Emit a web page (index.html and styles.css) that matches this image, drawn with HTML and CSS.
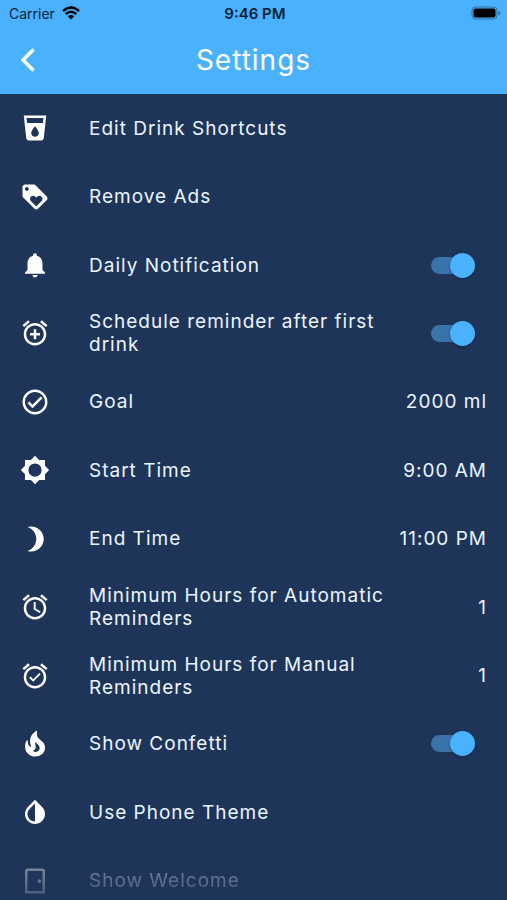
FILE: index.html
```html
<!DOCTYPE html>
<html lang="en">
<head>
<meta charset="utf-8">
<meta name="viewport" content="width=device-width, initial-scale=1">
<title>Settings</title>
<link rel="stylesheet" href="styles.css">
</head>
<body>
<div class="screen">
  <header class="top">
    <div class="status">
      <div class="carrier">
        <span>Carrier</span>
        <svg class="wifi" viewBox="0 0 18 14" aria-hidden="true">
          <path d="M1 5Q9 -2 17 5" />
          <path d="M3.800 8Q9 3.400 14.200 8" />
          <path class="dot" d="M9 13.500 5.900 10.300Q9 7.900 12.100 10.300Z" />
        </svg>
      </div>
      <time class="clock">9:46 PM</time>
      <svg class="battery" viewBox="0 0 30 14" aria-hidden="true">
        <rect class="shell" x="1" y="1" width="25" height="12" rx="3.500" />
        <rect x="2.500" y="2.500" width="22" height="9" rx="2" />
        <path class="tip" d="M27.500 4.800Q29.500 5.500 29.500 7T27.500 9.200Z" />
      </svg>
    </div>
    <div class="bar">
      <button class="back" type="button" aria-label="Back">
        <svg viewBox="0 0 16 26" aria-hidden="true"><path d="M13.500 2.500 3 13 13.500 23.500" /></svg>
      </button>
      <h1 class="title">Settings</h1>
    </div>
  </header>
  <main class="list">
    <div class="row">
      <svg class="icon" viewBox="0 0 24 24" aria-hidden="true"><path d="M3 2l2.010 18.230C5.130 21.230 5.970 22 7 22h10c1.030 0 1.870-.77 1.990-1.770L21 2H3zm9 17c-1.660 0-3-1.340-3-3 0-2 3-5.400 3-5.400s3 3.400 3 5.400c0 1.660-1.340 3-3 3zm6.330-11H5.670l-.44-4h13.550l-.45 4z" /></svg>
      <span class="label">Edit Drink Shortcuts</span>
    </div>
    <div class="row">
      <svg class="icon" viewBox="0 0 24 24" aria-hidden="true"><path d="M21.410 11.580l-9-9C12.050 2.220 11.550 2 11 2H4c-1.100 0-2 .9-2 2v7c0 .55.22 1.050.59 1.420l9 9c.36.36.86.58 1.410.58.55 0 1.050-.22 1.410-.59l7-7c.37-.36.59-.86.59-1.410 0-.55-.23-1.060-.59-1.420zM5.500 7C4.670 7 4 6.330 4 5.500S4.670 4 5.500 4 7 4.670 7 5.500 6.330 7 5.500 7zm11.770 8.270L13 19.540l-4.270-4.270C8.280 14.810 8 14.190 8 13.500c0-1.380 1.120-2.500 2.500-2.500.69 0 1.320.28 1.770.74l.73.72.73-.73c.45-.45 1.080-.73 1.770-.73 1.380 0 2.500 1.120 2.500 2.500 0 .69-.28 1.320-.73 1.770z" /></svg>
      <span class="label">Remove Ads</span>
    </div>
    <div class="row">
      <svg class="icon" viewBox="0 0 24 24" aria-hidden="true"><path d="M12 22c1.100 0 2-.9 2-2h-4c0 1.100.89 2 2 2zm6-6v-5c0-3.070-1.640-5.640-4.500-6.320V4c0-.83-.67-1.500-1.500-1.500s-1.500.67-1.500 1.500v.68C7.630 5.360 6 7.920 6 11v5l-2 2v1h16v-1l-2-2z" /></svg>
      <label class="label" for="daily">Daily Notification</label>
      <input class="switch" id="daily" type="checkbox" role="switch" checked>
    </div>
    <div class="row">
      <svg class="icon" viewBox="0 0 24 24" aria-hidden="true"><path d="M7.880 3.390L6.600 1.860 2 5.710l1.290 1.530 4.590-3.850zM22 5.720l-4.600-3.860-1.290 1.530 4.600 3.860L22 5.720zM12 4c-4.970 0-9 4.030-9 9s4.020 9 9 9c4.970 0 9-4.030 9-9s-4.030-9-9-9zm0 16c-3.870 0-7-3.130-7-7s3.130-7 7-7 7 3.130 7 7-3.130 7-7 7zm1-11h-2v3H8v2h3v3h2v-3h3v-2h-3V9z" /></svg>
      <label class="label" for="schedule">Schedule reminder after first drink</label>
      <input class="switch" id="schedule" type="checkbox" role="switch" checked>
    </div>
    <div class="row">
      <svg class="icon" viewBox="0 0 24 24" aria-hidden="true"><path d="M16.590 7.580L10 14.170l-2.590-2.580L6 13l4 4 8-8zM12 2C6.480 2 2 6.480 2 12s4.480 10 10 10 10-4.480 10-10S17.520 2 12 2zm0 18c-4.420 0-8-3.580-8-8s3.580-8 8-8 8 3.580 8 8-3.580 8-8 8z" /></svg>
      <span class="label">Goal</span>
      <span class="value">2000 ml</span>
    </div>
    <div class="row">
      <svg class="icon" viewBox="0 0 24 24" aria-hidden="true"><path fill-rule="evenodd" d="M20 15.310L23.310 12 20 8.690V4h-4.690L12 .69 8.690 4H4v4.690L.69 12 4 15.310V20h4.690L12 23.310 15.310 20H20v-4.690zM12 17.300a5.300 5.300 0 1 1 0-10.600 5.300 5.300 0 0 1 0 10.600z" /></svg>
      <span class="label">Start Time</span>
      <span class="value">9:00 AM</span>
    </div>
    <div class="row">
      <svg class="icon" viewBox="0 0 24 24" aria-hidden="true"><path d="M9 2c-1.050 0-2.050.16-3 .46 4.060 1.270 7 5.060 7 9.540 0 4.480-2.940 8.270-7 9.540.95.3 1.950.46 3 .46 5.520 0 10-4.480 10-10S14.520 2 9 2z" /></svg>
      <span class="label">End Time</span>
      <span class="value">11:00 PM</span>
    </div>
    <div class="row">
      <svg class="icon" viewBox="0 0 24 24" aria-hidden="true"><path d="M22 5.720l-4.600-3.860-1.290 1.530 4.600 3.860L22 5.720zM7.880 3.390L6.600 1.860 2 5.710l1.290 1.530 4.590-3.850zM12.500 8H11v6l4.750 2.850.75-1.230-4-2.370V8zM12 4c-4.970 0-9 4.030-9 9s4.020 9 9 9c4.970 0 9-4.030 9-9s-4.030-9-9-9zm0 16c-3.870 0-7-3.130-7-7s3.130-7 7-7 7 3.130 7 7-3.130 7-7 7z" /></svg>
      <span class="label">Minimum Hours for Automatic Reminders</span>
      <span class="value">1</span>
    </div>
    <div class="row">
      <svg class="icon" viewBox="0 0 24 24" aria-hidden="true"><path d="M22 5.720l-4.600-3.860-1.290 1.530 4.600 3.860L22 5.720zM7.880 3.390L6.600 1.860 2 5.710l1.290 1.530 4.590-3.850zM12 4c-4.970 0-9 4.030-9 9s4.020 9 9 9c4.970 0 9-4.030 9-9s-4.030-9-9-9zm0 16c-3.870 0-7-3.130-7-7s3.130-7 7-7 7 3.130 7 7-3.130 7-7 7zM10.540 14.530L8.410 12.400l-1.060 1.060 3.180 3.180 6-6-1.060-1.060-4.930 4.950z" /></svg>
      <span class="label">Minimum Hours for Manual Reminders</span>
      <span class="value">1</span>
    </div>
    <div class="row">
      <svg class="icon" viewBox="0 0 24 24" aria-hidden="true"><path d="M19.480 12.350c-1.570-4.080-7.160-4.300-5.810-10.230.1-.44-.37-.78-.75-.55C9.290 3.710 6.680 8 8.870 13.620c.18.46-.36.89-.75.59-1.810-1.370-2-3.340-1.840-4.750.06-.52-.62-.77-.91-.34C4.690 10.160 4 11.840 4 14.370c.38 5.600 5.110 7.320 6.810 7.540 2.430.31 5.060-.14 6.950-1.870 2.080-1.930 2.840-5.010 1.720-7.690zM10.200 17.380c1.440-.35 2.180-1.390 2.380-2.310.33-1.430-.96-2.830-.09-5.090.33 1.870 3.270 3.040 3.270 5.080.08 2.530-2.660 4.700-5.560 2.320z" /></svg>
      <label class="label" for="confetti">Show Confetti</label>
      <input class="switch" id="confetti" type="checkbox" role="switch" checked>
    </div>
    <div class="row">
      <svg class="icon" viewBox="0 0 24 24" aria-hidden="true"><path d="M17.660 7.930L12 2.270 6.340 7.930c-3.120 3.120-3.120 8.190 0 11.310C7.900 20.800 9.950 21.580 12 21.580s4.100-.78 5.660-2.340c3.120-3.120 3.120-8.190 0-11.310zM12 19.590c-1.600 0-3.110-.62-4.240-1.760C6.620 16.690 6 15.190 6 13.590s.62-3.110 1.760-4.240L12 5.100v14.490z" /></svg>
      <span class="label">Use Phone Theme</span>
    </div>
    <div class="row faded">
      <svg class="icon" viewBox="0 0 24 24" aria-hidden="true"><path fill-rule="evenodd" d="M6 2h12c1.100 0 2 .9 2 2v18H4V4c0-1.100.9-2 2-2zm0 2v16h12V4zm9.500 6.500a1.500 1.500 0 1 1 0 3 1.500 1.500 0 0 1 0-3z" /></svg>
      <span class="label">Show Welcome</span>
    </div>
  </main>
</div>
</body>
</html>
```
FILE: styles.css
```css
* {
  box-sizing: border-box;
}

body {
  margin: 0;
  background: #1e3559;
  color: #ebf5ff;
  font-family: Inter, "Liberation Sans", sans-serif;
}

.screen {
  height: 100vh;
  overflow: hidden;
}

.top {
  background: #4ab1ff;
}

.status {
  display: grid;
  grid-template-columns: 1fr auto 1fr;
  align-items: center;
  height: 26px;
  padding: 0 6px 0 9px;
  color: #0b2236;
  font-size: 14px;
}

.carrier {
  display: flex;
  align-items: center;
  gap: 7px;
}

.wifi {
  width: 18px;
  height: 14px;
  fill: none;
  stroke: #000000;
  stroke-width: 2.5;
}

.wifi .dot {
  fill: #000000;
  stroke: none;
}

.clock {
  font-size: 15px;
  font-weight: 600;
}

.battery {
  justify-self: end;
  width: 30px;
  height: 14px;
}

.battery .shell {
  fill: none;
  stroke: #2c6c9b;
  stroke-width: 1;
}

.battery .tip {
  fill: #2c6c9b;
}

.bar {
  display: grid;
  grid-template-columns: 56px 1fr 56px;
  align-items: center;
  height: 68px;
}

.back {
  display: flex;
  align-items: center;
  justify-content: center;
  height: 56px;
  padding: 0;
  border: 0;
  background: none;
}

.back svg {
  width: 16px;
  height: 26px;
  fill: none;
  stroke: #ffffff;
  stroke-width: 3.5;
}

.title {
  margin: 0;
  color: #ffffff;
  font-size: 28px;
  font-weight: 400;
  letter-spacing: 1px;
  text-align: center;
}

.list {
  display: grid;
  grid-template-rows: repeat(12, 1fr);
  min-height: 821px;
}

.row {
  display: flex;
  align-items: center;
  padding: 0 20px;
  font-size: 19px;
  line-height: 23px;
  letter-spacing: 1px;
}

.icon {
  flex: none;
  width: 30px;
  height: 30px;
  margin-right: 39px;
  fill: #ffffff;
}

.label {
  flex: 1;
  padding-right: 20px;
}

.switch {
  appearance: none;
  position: relative;
  flex: none;
  width: 44px;
  height: 17px;
  margin: 0 12px 0 0;
  border-radius: 9px;
  background: #3874a9;
}

.switch::before {
  content: "";
  position: absolute;
  top: -4px;
  left: 0;
  width: 25px;
  height: 25px;
  border-radius: 50%;
  background: #b8c4d0;
  box-shadow: 0 1px 3px rgba(0, 0, 0, 0.3);
}

.switch:checked::before {
  right: 0;
  left: auto;
  background: #4ab1ff;
}

.faded {
  mask-image: linear-gradient(rgba(0, 0, 0, 0.55), rgba(0, 0, 0, 0.05));
}
```
